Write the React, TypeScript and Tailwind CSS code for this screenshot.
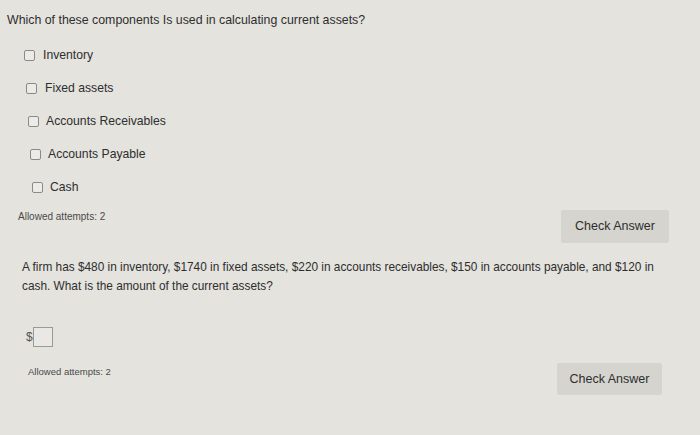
import React from "react";

const Box = () => (
  <span className="inline-block w-[11px] h-[11px] border border-[#8a8a88] rounded-[2px] bg-[#ecebe7]" />
);

const options = [
  { label: "Inventory", ml: "ml-[24px]", gap: "gap-[8px]" },
  { label: "Fixed assets", ml: "ml-[26px]", gap: "gap-[8px]" },
  { label: "Accounts Receivables", ml: "ml-[28px]", gap: "gap-[7px]" },
  { label: "Accounts Payable", ml: "ml-[30px]", gap: "gap-[7px]" },
  { label: "Cash", ml: "ml-[32px]", gap: "gap-[7px]" },
];

export default function App() {
  return (
    <div
      className="w-[700px] h-[435px] bg-[#e4e3de] text-[#2e2e2e] overflow-hidden"
      style={{ fontFamily: '"Liberation Sans", Arial, sans-serif' }}
    >
      <div className="pt-[12px] pl-[7px] text-[12.35px] leading-[16px]">
        Which of these components Is used in calculating current assets?
      </div>
      <div className="mt-[19px] flex flex-col gap-[17px]">
        {options.map((o) => (
          <div key={o.label} className={`flex items-center ${o.ml} ${o.gap} h-[16px] text-[12.2px]`}>
            <Box />
            <span>{o.label}</span>
          </div>
        ))}
      </div>
      <div className="flex justify-between items-start pr-[31px]">
        <div className="mt-[14px] ml-[18px] text-[10px] text-[#4a4a4a]">Allowed attempts: 2</div>
        <div className="mt-[15px] w-[108px] h-[33px] bg-[#d5d4cf] rounded-[2px] flex items-center justify-center text-[12.5px] text-[#2e2e2e]">
          Check Answer
        </div>
      </div>
      <div className="mt-[15px] ml-[22px] w-[645px] text-[11.85px] leading-[19px]">
        A firm has $480 in inventory, $1740 in fixed assets, $220 in accounts receivables, $150 in accounts payable, and $120 in cash. What is the amount of the current assets?
      </div>
      <div className="mt-[31px] ml-[26px] flex items-center">
        <span className="text-[12px] text-[#555]">$</span>
        <span className="inline-block w-[20px] h-[20px] border border-[#9a9a98] bg-[#e9e8e4]" />
      </div>
      <div className="flex justify-between items-start pr-[38px]">
        <div className="mt-[18px] ml-[28px] text-[9.5px] text-[#4a4a4a]">Allowed attempts: 2</div>
        <div className="mt-[16px] w-[105px] h-[32px] bg-[#d5d4cf] rounded-[2px] flex items-center justify-center text-[12.5px] text-[#2e2e2e]">
          Check Answer
        </div>
      </div>
    </div>
  );
}
